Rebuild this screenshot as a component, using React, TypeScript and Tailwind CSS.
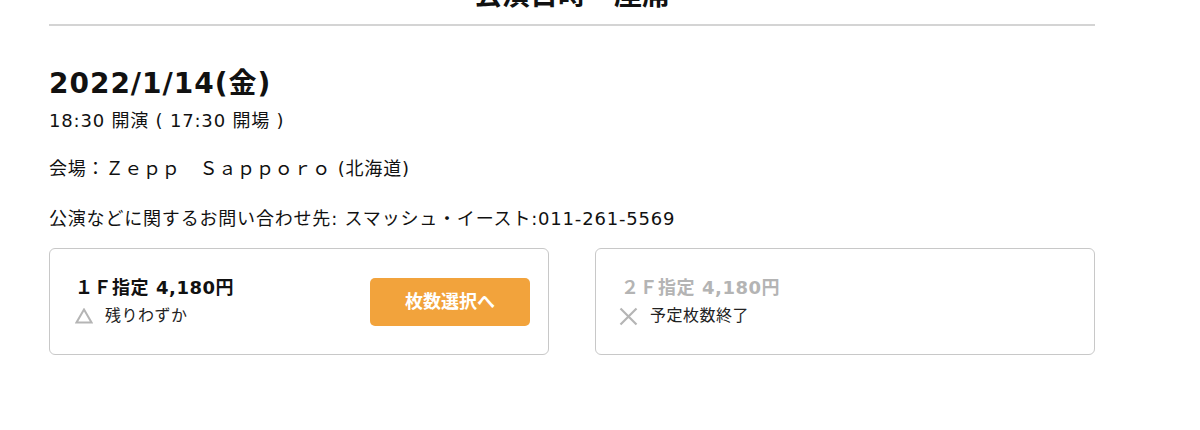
const seats = [
  {
    name: "１Ｆ指定 4,180円",
    status: "残りわずか",
    mark: "triangle",
    open: true,
  },
  {
    name: "２Ｆ指定 4,180円",
    status: "予定枚数終了",
    mark: "cross",
    open: false,
  },
];

function Triangle() {
  return (
    <svg width="18" height="16" viewBox="0 0 18 16" className="shrink-0">
      <path d="M9 1.5 L16.5 14.5 L1.5 14.5 Z" fill="none" stroke="#b5b5b5" strokeWidth="2" />
    </svg>
  );
}

function Cross() {
  return (
    <svg width="19" height="19" viewBox="0 0 19 19" className="-ml-[2px] shrink-0">
      <path d="M1.5 1.5 L17.5 17.5 M17.5 1.5 L1.5 17.5" stroke="#b5b5b5" strokeWidth="2.2" />
    </svg>
  );
}

export default function App() {
  return (
    <div
      className="h-[430px] overflow-hidden bg-white text-[#111]"
      style={{ fontFamily: '"DejaVu Sans", "Noto Sans CJK JP", sans-serif' }}
    >
      <div className="ml-[49px] w-[1046px]">
        <h2 className="-mt-[21px] border-b-2 border-[#d4d4d4] pb-[11px] text-center text-[28px] leading-[34px] font-bold">
          公演日時・座席
        </h2>

        <div className="pt-[41px] text-[18px] leading-[26px] tracking-[0.045em]">
          <p className="text-[28px] leading-[34px] font-bold tracking-[0.035em]">2022/1/14(金)</p>
          <p className="mt-[7px]">18:30 開演 ( 17:30 開場 )</p>
          <p className="mt-[22px]">会場：Ｚｅｐｐ　Ｓａｐｐｏｒｏ (北海道)</p>
          <p className="mt-[24px]">公演などに関するお問い合わせ先: スマッシュ・イースト:011-261-5569</p>
        </div>

        <div className="mt-[16px] grid grid-cols-2 gap-[46px]">
          {seats.map((seat) => (
            <div
              key={seat.name}
              className="flex h-[107px] items-center justify-between rounded-[6px] border border-[#c8c8c8] pr-[18px] pl-[25px]"
            >
              <div>
                <p
                  className={
                    seat.open
                      ? "text-[18px] leading-[24px] font-bold tracking-[0.03em] text-[#111]"
                      : "text-[18px] leading-[24px] font-bold tracking-[0.03em] text-[#b4b4b4]"
                  }
                >
                  {seat.name}
                </p>
                <div className="mt-[5px] flex items-center gap-[12px] text-[16px] leading-[22px] tracking-[0.03em] text-[#222]">
                  {seat.mark === "triangle" ? <Triangle /> : <Cross />}
                  <span>{seat.status}</span>
                </div>
              </div>
              {seat.open ? (
                <button
                  type="button"
                  className="h-[48px] w-[160px] rounded-[5px] bg-[#f2a33c] text-[18px] font-bold text-white"
                >
                  枚数選択へ
                </button>
              ) : null}
            </div>
          ))}
        </div>
      </div>
    </div>
  );
}
